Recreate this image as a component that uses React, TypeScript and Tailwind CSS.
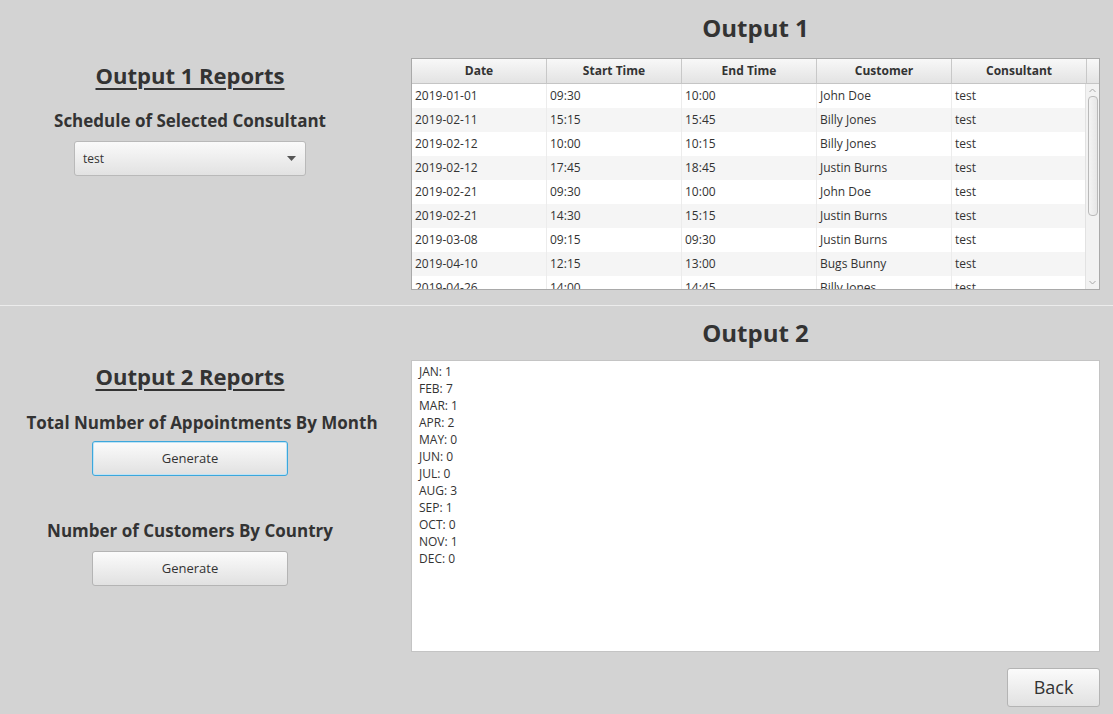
import { useState } from "react";

const rows = [
  ["2019-01-01", "09:30", "10:00", "John Doe", "test"],
  ["2019-02-11", "15:15", "15:45", "Billy Jones", "test"],
  ["2019-02-12", "10:00", "10:15", "Billy Jones", "test"],
  ["2019-02-12", "17:45", "18:45", "Justin Burns", "test"],
  ["2019-02-21", "09:30", "10:00", "John Doe", "test"],
  ["2019-02-21", "14:30", "15:15", "Justin Burns", "test"],
  ["2019-03-08", "09:15", "09:30", "Justin Burns", "test"],
  ["2019-04-10", "12:15", "13:00", "Bugs Bunny", "test"],
  ["2019-04-26", "14:00", "14:45", "Billy Jones", "test"],
];

const months = [
  "JAN: 1",
  "FEB: 7",
  "MAR: 1",
  "APR: 2",
  "MAY: 0",
  "JUN: 0",
  "JUL: 0",
  "AUG: 3",
  "SEP: 1",
  "OCT: 0",
  "NOV: 1",
  "DEC: 0",
];

const columns = ["Date", "Start Time", "End Time", "Customer", "Consultant"];

const FxButton = ({ label, focused }: { label: string; focused?: boolean }) => (
  <button
    className={
      "w-[196px] h-[35px] rounded-[3px] bg-gradient-to-b from-[#fbfbfb] to-[#e1e1e1] text-[13px] text-[#333] " +
      (focused
        ? "border border-[#3ca7dc] shadow-[inset_0_0_0_1px_#bfe3f5]"
        : "border border-[#b4b4b4]")
    }
  >
    {label}
  </button>
);

const ScheduleTable = () => (
  <div className="w-[689px] h-[232px] border border-[#a9a9a9] bg-white flex flex-col overflow-hidden">
    <div className="flex h-[25px] shrink-0 bg-gradient-to-b from-[#f8f8f8] to-[#e3e3e3] border-b border-[#c5c5c5]">
      {columns.map((c) => (
        <div
          key={c}
          className="w-[135px] shrink-0 flex items-center justify-center text-[12px] font-bold border-r border-[#c8c8c8]"
        >
          {c}
        </div>
      ))}
      <div className="flex-1" />
    </div>
    <div className="flex flex-1 min-h-0">
      <div className="w-[674px] overflow-hidden">
        {rows.map((r, i) => (
          <div key={i} className={"flex h-[24px] " + (i % 2 === 1 ? "bg-[#f5f5f5]" : "bg-white")}>
            {r.map((cell, j) => (
              <div
                key={j}
                className="w-[135px] shrink-0 flex items-center pl-[3px] text-[12px] border-r border-[#ececec] whitespace-nowrap"
              >
                {cell}
              </div>
            ))}
          </div>
        ))}
      </div>
      <div className="w-[14px] bg-[#f2f2f2] border-l border-[#e2e2e2] flex flex-col items-center">
        <svg width="9" height="9" viewBox="0 0 9 9" className="mt-[2px]">
          <path d="M1.5 6 L4.5 3 L7.5 6" fill="none" stroke="#a8a8a8" strokeWidth="1" />
        </svg>
        <div className="w-[10px] h-[120px] mt-[1px] rounded-[4px] bg-gradient-to-r from-[#f4f4f4] to-[#e6e6e6] border border-[#b9b9b9]" />
        <div className="flex-1" />
        <svg width="9" height="9" viewBox="0 0 9 9" className="mb-[2px]">
          <path d="M1.5 3 L4.5 6 L7.5 3" fill="none" stroke="#a8a8a8" strokeWidth="1" />
        </svg>
      </div>
    </div>
  </div>
);

export default function App() {
  const [consultant] = useState("test");

  return (
    <div className="w-[1113px] h-[714px] bg-[#d3d3d3] text-[#333] font-['Open_Sans',sans-serif] overflow-hidden">
      <section className="flex h-[305px]">
        <div className="w-[380px] shrink-0 flex flex-col items-center pt-[60px]">
          <h2 className="text-[22px] leading-[30px] font-bold underline decoration-2 underline-offset-[4px]">
            Output 1 Reports
          </h2>
          <p className="mt-[19px] text-[17px] leading-[24px] font-bold">Schedule of Selected Consultant</p>
          <div className="mt-[8px] w-[232px] h-[35px] rounded-[3px] border border-[#b9b9b9] bg-gradient-to-b from-[#fafafa] to-[#e2e2e2] flex items-center justify-between px-[8px]">
            <span className="text-[12px]">{consultant}</span>
            <svg width="9" height="5" viewBox="0 0 9 5" className="mr-[1px]">
              <path d="M0 0 H9 L4.5 5 Z" fill="#555" />
            </svg>
          </div>
        </div>
        <div className="ml-[31px] w-[689px] flex flex-col items-center pt-[11px]">
          <h1 className="text-[24px] leading-[34px] font-bold">Output 1</h1>
          <div className="mt-[13px]">
            <ScheduleTable />
          </div>
        </div>
      </section>

      <div className="h-px bg-[#ececec]" />

      <section className="flex h-[408px]">
        <div className="w-[380px] shrink-0 flex flex-col items-center pt-[55px]">
          <h2 className="text-[22px] leading-[30px] font-bold underline decoration-2 underline-offset-[4px]">
            Output 2 Reports
          </h2>
          <p className="mt-[20px] ml-[24px] text-[17px] leading-[24px] font-bold whitespace-nowrap">
            Total Number of Appointments By Month
          </p>
          <div className="mt-[6px]">
            <FxButton label="Generate" focused />
          </div>
          <p className="mt-[43px] text-[17px] leading-[24px] font-bold">Number of Customers By Country</p>
          <div className="mt-[8px]">
            <FxButton label="Generate" />
          </div>
        </div>
        <div className="ml-[31px] w-[689px] flex flex-col items-center pt-[10px]">
          <h1 className="text-[24px] leading-[34px] font-bold">Output 2</h1>
          <div className="mt-[10px] w-[689px] h-[292px] bg-white border border-[#c4c4c4] pt-[2px] pl-[7px]">
            {months.map((m) => (
              <div key={m} className="text-[12px] leading-[17px]">
                {m}
              </div>
            ))}
          </div>
          <div className="self-end mt-[16px]">
            <button className="w-[93px] h-[39px] rounded-[3px] border border-[#b4b4b4] bg-gradient-to-b from-[#fbfbfb] to-[#e1e1e1] text-[18px] text-[#333]">
              Back
            </button>
          </div>
        </div>
      </section>
    </div>
  );
}
